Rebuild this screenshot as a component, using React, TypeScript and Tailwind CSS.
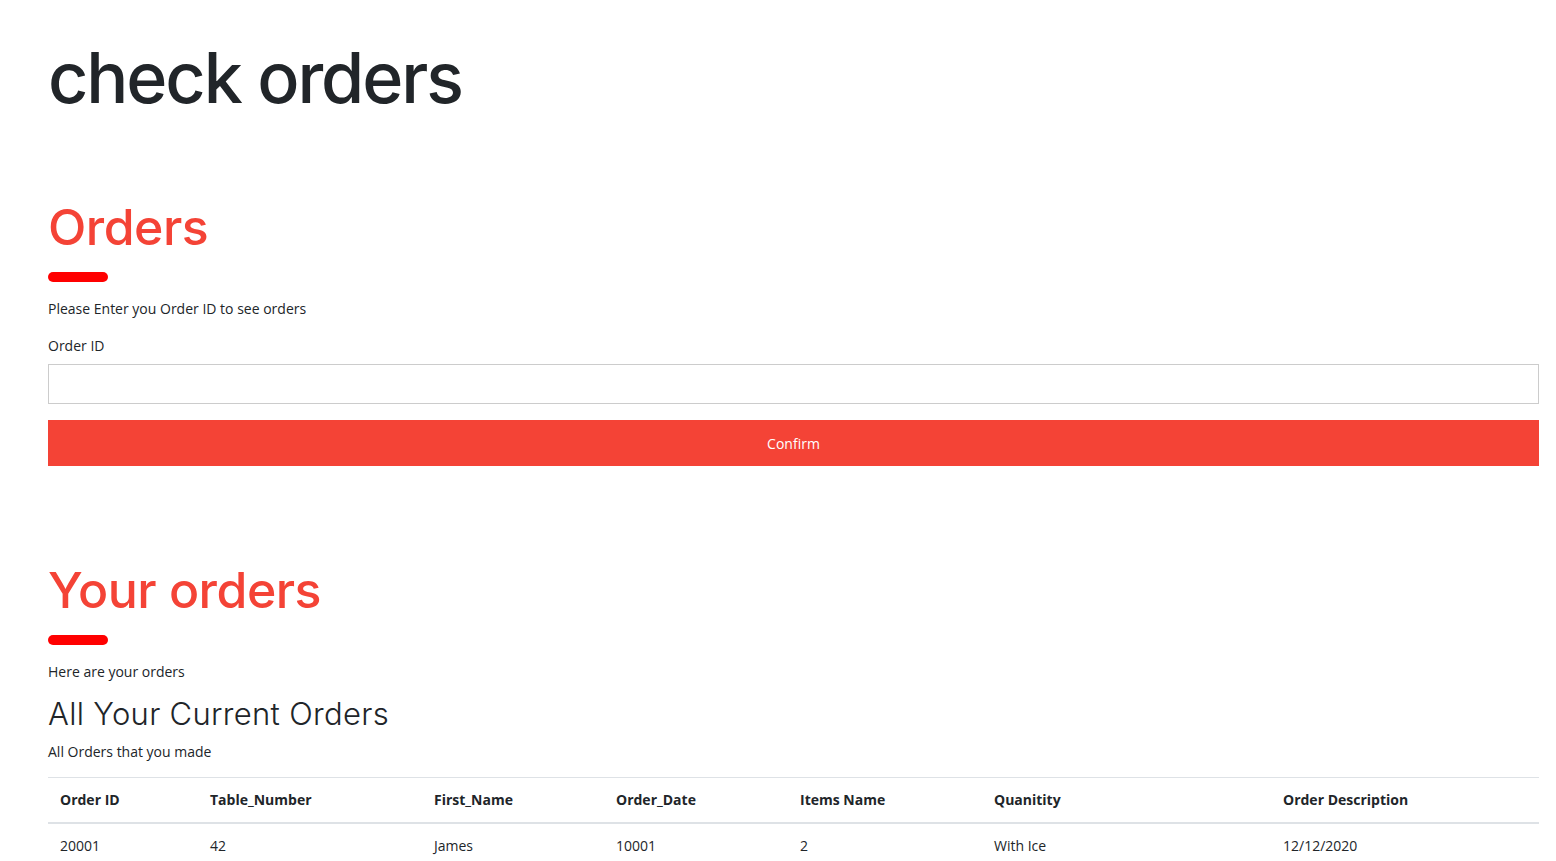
import React from 'react';

const headingFont = { fontFamily: 'Inter, "Noto Sans", sans-serif' };

const columns = [
  { label: 'Order ID', width: 'w-[150px]' },
  { label: 'Table_Number', width: 'w-[224px]' },
  { label: 'First_Name', width: 'w-[182px]' },
  { label: 'Order_Date', width: 'w-[184px]' },
  { label: 'Items Name', width: 'w-[194px]' },
  { label: 'Quanitity', width: 'w-[289px]' },
  { label: 'Order Description', width: '' },
];

const rows = [['20001', '42', 'James', '10001', '2', 'With Ice', '12/12/2020']];

const SectionTitle: React.FC<{ title: string; subtitle: string }> = ({ title, subtitle }) => (
  <div>
    <h2
      className="text-[50px] leading-[60px] font-medium tracking-[-0.01em] text-[#f44336]"
      style={headingFont}
    >
      {title}
    </h2>
    <div className="mt-[15px] h-[10px] w-[60px] rounded-full bg-[#ff0000]" />
    <p className="mt-[17px] text-[14px] leading-[20px]">{subtitle}</p>
  </div>
);

const App: React.FC = () => {
  return (
    <div
      className="min-h-screen bg-white pl-12 pr-[17px] text-[#212529]"
      style={{ fontFamily: '"Open Sans", "Noto Sans", sans-serif' }}
    >
      {/* Page title */}
      <h1
        className="pt-[36px] text-[70px] leading-[84px] font-medium tracking-[-0.03em]"
        style={headingFont}
      >
        check orders
      </h1>

      {/* Order lookup */}
      <section className="mt-[77px]">
        <SectionTitle title="Orders" subtitle="Please Enter you Order ID to see orders" />
        <label className="mt-[17px] block text-[14px] leading-[20px]">Order ID</label>
        <input
          type="text"
          className="mt-[8px] block h-[40px] w-full border border-[#cccccc] px-3 text-[14px] outline-none"
        />
        <button className="mt-[16px] flex h-[46px] w-full items-center justify-center bg-[#f44336] text-[14px] text-white">
          Confirm
        </button>
      </section>

      {/* Results */}
      <section className="mt-[94px]">
        <SectionTitle title="Your orders" subtitle="Here are your orders" />
        <h3
          className="mt-[12px] text-[31px] leading-[40px] font-light tracking-[0.01em]"
          style={headingFont}
        >
          All Your Current Orders
        </h3>
        <p className="mt-[8px] text-[14px] leading-[20px]">All Orders that you made</p>

        <table className="mt-[15px] w-full border-collapse text-left text-[14px]">
          <thead>
            <tr className="border-t border-[#dee2e6] border-b-2">
              {columns.map((col) => (
                <th key={col.label} className={`${col.width} px-3 py-[12px] font-bold leading-[20px]`}>
                  {col.label}
                </th>
              ))}
            </tr>
          </thead>
          <tbody>
            {rows.map((row, i) => (
              <tr key={i} className="border-b border-[#dee2e6]">
                {row.map((cell, j) => (
                  <td key={j} className="px-3 py-[12px] leading-[20px]">
                    {cell}
                  </td>
                ))}
              </tr>
            ))}
          </tbody>
        </table>
      </section>
    </div>
  );
};

export default App;
